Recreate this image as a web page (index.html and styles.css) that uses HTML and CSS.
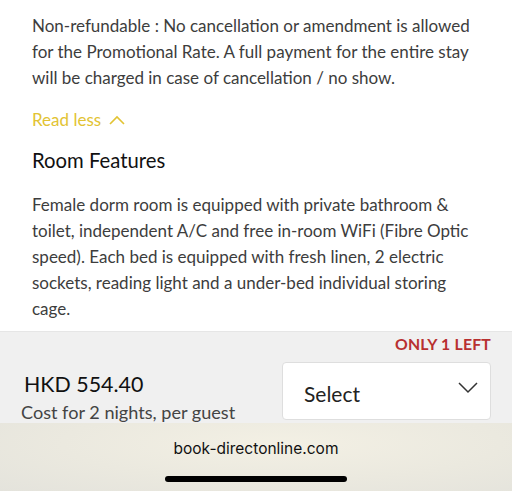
FILE: index.html
```html
<!DOCTYPE html>
<html>
<head>
<meta charset="utf-8">
<link rel="stylesheet" href="styles.css">
</head>
<body>
<div class="page">
  <main class="content">
    <p class="text">Non-refundable : No cancellation or amendment is allowed for the Promotional Rate. A full payment for the entire stay will be charged in case of cancellation / no show.</p>
    <div class="readless">Read less
      <svg class="up" width="16" height="10" viewBox="0 0 16 10"><path d="M1 9 L8 2 L15 9" fill="none" stroke="#e2c333" stroke-width="1.6"/></svg>
    </div>
    <h2 class="title">Room Features</h2>
    <p class="text">Female dorm room is equipped with private bathroom &amp; toilet, independent A/C and free in-room WiFi (Fibre Optic speed). Each bed is equipped with fresh linen, 2 electric sockets, reading light and a under-bed individual storing cage.</p>
  </main>
  <section class="bar">
    <div class="left-tag">ONLY 1 LEFT</div>
    <div class="row">
      <div class="price">
        <div class="amount">HKD 554.40</div>
        <div class="cost">Cost for 2 nights, per guest</div>
      </div>
      <div class="select">
        <span>Select</span>
        <svg width="20" height="12" viewBox="0 0 20 12"><path d="M1 1 L10 10 L19 1" fill="none" stroke="#333" stroke-width="1.5"/></svg>
      </div>
    </div>
  </section>
  <footer class="browser">
    <div class="url">book-directonline.com</div>
    <div class="home"></div>
  </footer>
</div>
</body>
</html>
```
FILE: styles.css
```css
html, body { margin: 0; padding: 0; }
body { width: 512px; height: 491px; overflow: hidden; background: #fff; font-family: Lato, "Open Sans", sans-serif; }
.page { display: flex; flex-direction: column; height: 491px; }
.content { padding: 13px 30px 0 32px; height: 318px; overflow: hidden; }
.text { margin: 0; font-size: 17px; line-height: 26px; color: #3d3d3d; }
.readless { margin-top: 16px; color: #e2c333; font-size: 17px; line-height: 26px; display: flex; align-items: center; gap: 8px; }
.title { margin: 13px 0 18px; font-weight: 400; font-size: 20.3px; line-height: 28px; color: #111; }
.bar { background: #f0f0f0; border-top: 1px solid #e6e6e6; height: 91px; padding: 0 21px 0 21px; }
.left-tag { text-align: right; color: #b83030; font-weight: 700; font-size: 15.8px; line-height: 20px; margin-top: 2px; letter-spacing: 0.2px; }
.row { display: flex; justify-content: space-between; align-items: flex-start; margin-top: 8px; }
.price { padding-top: 8px; }
.amount { font-size: 21.4px; line-height: 28px; color: #111; margin-left: 3px; }
.cost { font-size: 18.1px; line-height: 22px; color: #444; margin-top: 3px; }
.select { background: #fff; border: 1px solid #dedede; border-radius: 4px; display: flex; align-items: center; justify-content: space-between; padding: 0 12px 0 21px; box-sizing: border-box; width: 209px; height: 58px; font-size: 21px; color: #222; }
.select span { padding-top: 4px; }
.select svg { margin-bottom: 6px; }
.browser { flex: 1; background: radial-gradient(ellipse at 55% 30%, #f3f0e4 0%, #ebe9df 55%, #e4e3dc 100%); display: flex; flex-direction: column; align-items: center; }
.url { font-family: Inter, "Noto Sans", sans-serif; font-size: 15.5px; color: #111; margin-top: 17px; line-height: 18px; }
.home { width: 182px; height: 6px; border-radius: 3px; background: #000; margin-top: 18px; }
```
